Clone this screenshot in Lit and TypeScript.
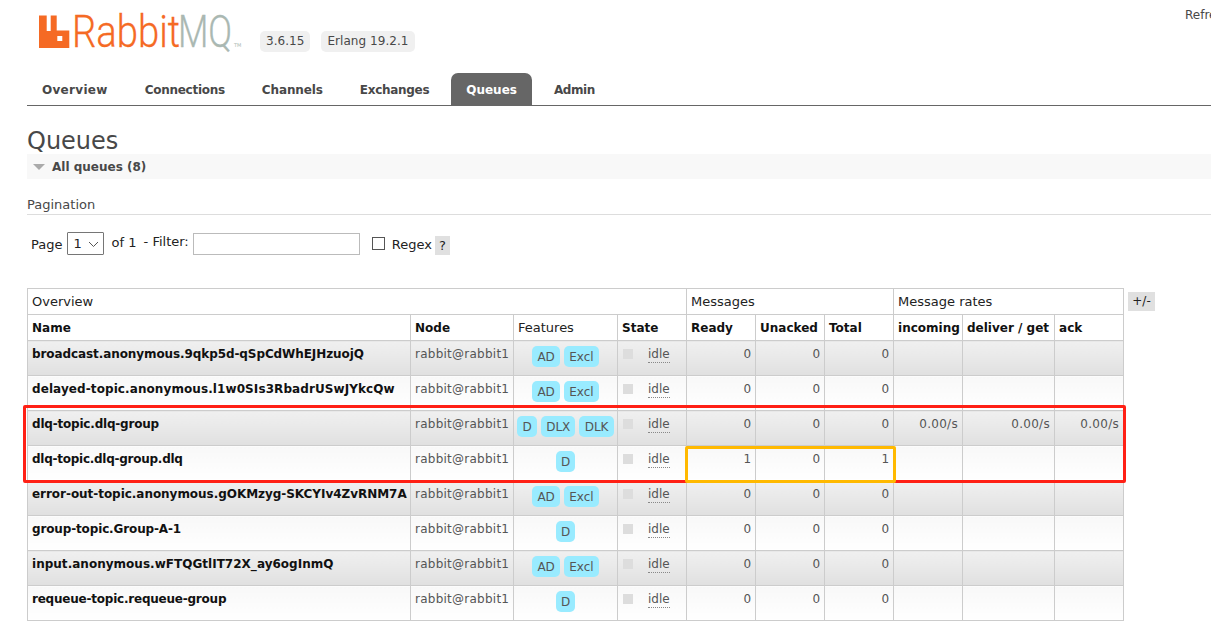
import { LitElement, html, css, svg } from "lit";
import { customElement } from "lit/decorators.js";

const rows = [
  ["broadcast.anonymous.9qkp5d-qSpCdWhEJHzuojQ", ["AD", "Excl"], "0", "0", "0", false, -0.09],
  ["delayed-topic.anonymous.l1w0SIs3RbadrUSwJYkcQw", ["AD", "Excl"], "0", "0", "0", false, 0.09],
  ["dlq-topic.dlq-group", ["D", "DLX", "DLK"], "0", "0", "0", true, -0.2],
  ["dlq-topic.dlq-group.dlq", ["D"], "1", "0", "1", false, -0.26],
  ["error-out-topic.anonymous.gOKMzyg-SKCYIv4ZvRNM7A", ["AD", "Excl"], "0", "0", "0", false, -0.04],
  ["group-topic.Group-A-1", ["D"], "0", "0", "0", false, -0.14],
  ["input.anonymous.wFTQGtlIT72X_ay6ogInmQ", ["AD", "Excl"], "0", "0", "0", false, 0.02],
  ["requeue-topic.requeue-group", ["D"], "0", "0", "0", false, -0.22],
] as const;

const colWidths = [383, 103, 104, 69, 69, 69, 69, 69, 92, 69];
const tabs: [string, number][] = [
  ["Overview", 0.3],
  ["Connections", -0.27],
  ["Channels", -0.12],
  ["Exchanges", -0.3],
  ["Queues", 0],
  ["Admin", -0.4],
];

@customElement("app-root")
export class AppRoot extends LitElement {
  static styles = css`
    :host {
      display: block;
      width: 1211px;
      height: 636px;
      overflow: hidden;
      background: #fff;
      font: 12px "DejaVu Sans", Verdana, sans-serif;
      color: #484848;
    }
    .header {
      height: 73px;
      padding-left: 39px;
      display: flex;
      align-items: flex-start;
      position: relative;
    }
    .logo { display: block; margin-top: 10px; overflow: visible; }
    .version {
      background: #f0f0f0;
      border-radius: 5px;
      padding: 0 6px;
      height: 21px;
      line-height: 21px;
      margin-top: 31px;
      font-size: 12px;
      letter-spacing: 0.05px;
    }
    .v1 { margin-left: 15px; }
    .v2 { margin-left: 11px; }
    .refresh { position: absolute; left: 1185px; top: 8px; white-space: nowrap; }
    .tabs {
      display: flex;
      margin-left: 27px;
      height: 32px;
      border-bottom: 1px solid #666;
    }
    .tab {
      padding: 2px 15px 0;
      line-height: 30px;
      font-weight: bold;
      margin-right: 7px;
      border-radius: 7px 7px 0 0;
      color: #484848;
    }
    .tab.on { background: #666; color: #fff; }
    .content { padding-left: 27px; }
    h1 {
      margin: 0;
      font-size: 24px;
      font-weight: normal;
      line-height: 30px;
      padding-top: 20px;
      height: 28px;
      color: #484848;
    }
    .section {
      height: 25px;
      background: #f8f8f8;
      display: flex;
      align-items: center;
      gap: 7px;
      font-weight: bold;
      padding-left: 6px;
    }
    .tri {
      width: 0;
      height: 0;
      border-left: 6px solid transparent;
      border-right: 6px solid transparent;
      border-top: 6px solid #aaa;
    }
    .pag {
      margin-top: 18px;
      height: 17px;
      border-bottom: 1px solid #ddd;
      line-height: 15px;
      font-size: 13px;
    }
    .filter {
      display: flex;
      align-items: flex-start;
      height: 56px;
      padding: 17px 0 0 4px;
      color: #222;
      font-size: 13px;
    }
    .filter span { white-space: pre; }
    .t1 { margin-top: 5px; }
    .sel {
      box-sizing: border-box;
      width: 37px;
      height: 23px;
      border: 1px solid #767676;
      margin-left: 5px;
      display: flex;
      align-items: center;
      justify-content: space-between;
      padding: 0 4px 0 5px;
      border-radius: 1px;
      background: #fff;
    }
    .t2 { margin: 3px 0 0 7px; }
    .t3 { margin: 2px 0 0 3px; }
    input[type="text"] {
      box-sizing: border-box;
      width: 167px;
      height: 22px;
      border: 1px solid #bbb;
      margin: 1px 0 0 4px;
      padding: 0;
      background: #fff;
    }
    input[type="checkbox"] {
      appearance: none;
      box-sizing: border-box;
      width: 13px;
      height: 13px;
      border: 1px solid #555;
      margin: 5px 0 0 12px;
      background: #fff;
    }
    .t4 { margin: 5px 0 0 7px; }
    .help {
      width: 15px;
      height: 19px;
      line-height: 19px;
      margin: 4px 0 0 3px;
      text-align: center;
      background: #e0e0e0;
    }
    .wrap { position: relative; width: 1184px; }
    table {
      border-collapse: collapse;
      table-layout: fixed;
      width: 1096px;
    }
    th, td {
      border: 1px solid #ccc;
      padding: 0 4px;
      vertical-align: top;
      white-space: nowrap;
      overflow: hidden;
    }
    th {
      color: #111;
      text-align: left;
      font-weight: bold;
      padding-top: 1px;
      height: 24px;
      line-height: 24px;
      background: #fff;
    }
    th.plain { font-weight: normal; color: #222; font-size: 13px; }
    td { line-height: 15px; padding-top: 6px; box-sizing: border-box; height: 35px; color: #555; }
    tr.alt1 td { background: linear-gradient(#f0f0f0, #e0e0e0); }
    tr.alt2 td { background: linear-gradient(#f8f8f8, #fff); }
    td.name { font-weight: bold; color: #111; }
    td.node { letter-spacing: 0.25px; }
    td.feat { text-align: center; padding: 5px 0 0; line-height: 0; }
    td.num { text-align: right; }
    td.rate { letter-spacing: 0.3px; }
    .badge {
      display: inline-block;
      height: 21px;
      line-height: 22px;
      background: #99ebff;
      border-radius: 5px;
      padding: 0 5.2px;
      margin: 0 2px;
      color: #555;
    }
    .state { display: flex; align-items: flex-start; }
    .dot { width: 10px; height: 10px; background: #ddd; margin: 2px 0 0 1px; }
    .idle {
      margin-left: 15px;
      border-bottom: 1px dotted #888;
      line-height: 15px;
    }
    .toggle {
      position: absolute;
      left: 1101px;
      top: 4px;
      width: 27px;
      height: 19px;
      line-height: 19px;
      text-align: center;
      background: #e0e0e0;
      color: #222;
    }
    .mark { position: absolute; box-sizing: border-box; pointer-events: none; border-radius: 2px; }
    .red { left: -4px; top: 117px; width: 1103px; height: 78px; border: 3px solid #ff2015; }
    .orange { left: 658px; top: 158px; width: 211px; height: 37px; border: 3px solid #ffb900; }
  `;

  private logo() {
    return html`<svg class="logo" width="206" height="42" viewBox="0 0 206 42">
      ${svg`<path fill="#f56a24" fill-rule="evenodd" d="M0 5.500H7.700V21H11.700V5.500H17.700V20.500H30.300V38H0ZM18.300 26V31H23.300V26Z"></path>
      <g font-family="Roboto, Lato, sans-serif" font-size="45" font-weight="300" stroke-width=".3">
        <text transform="translate(33 37) scale(.85 1)" fill="#f56a24" stroke="#f56a24">Rabbit</text>
        <text transform="translate(139 37) scale(.78 1)" fill="#aab8b2" stroke="#aab8b2">MQ</text>
      </g>
      <text x="195" y="37" font-family="'DejaVu Sans', sans-serif" font-size="5" fill="#aab8b2">TM</text>`}
    </svg>`;
  }

  render() {
    return html`
      <div class="header">
        ${this.logo()}
        <div class="version v1">3.6.15</div>
        <div class="version v2">Erlang 19.2.1</div>
        <div class="refresh">Refresh</div>
      </div>
      <div class="tabs">
        ${tabs.map(
          ([t, ls]) => html`<div class="tab ${t === "Queues" ? "on" : ""}" style="letter-spacing:${ls}px">${t}</div>`
        )}
      </div>
      <div class="content">
        <h1>Queues</h1>
        <div class="section"><i class="tri"></i>All queues (8)</div>
        <div class="pag">Pagination</div>
        <div class="filter">
          <span class="t1">Page</span>
          <div class="sel">1
            <svg width="11" height="6" viewBox="0 0 11 6"><path d="M1 1l4.500 4.500L10 1" fill="none" stroke="#555"></path></svg>
          </div>
          <span class="t2">of 1</span>
          <span class="t3"> - Filter:</span>
          <input type="text" />
          <input type="checkbox" />
          <span class="t4">Regex</span>
          <div class="help">?</div>
        </div>
        <div class="wrap">
          <table>
            <colgroup>${colWidths.map((w) => html`<col style="width:${w}px" />`)}</colgroup>
            <tr>
              <th class="plain" colspan="4">Overview</th>
              <th class="plain" colspan="3">Messages</th>
              <th class="plain" colspan="3">Message rates</th>
            </tr>
            <tr>
              <th>Name</th><th>Node</th><th class="plain">Features</th><th>State</th>
              <th>Ready</th><th>Unacked</th><th>Total</th>
              <th>incoming</th><th>deliver / get</th><th>ack</th>
            </tr>
            ${rows.map(
              (r, i) => html`<tr class=${i % 2 ? "alt2" : "alt1"}>
                <td class="name" style="letter-spacing:${r[6]}px">${r[0]}</td>
                <td class="node">rabbit@rabbit1</td>
                <td class="feat">${r[1].map((b) => html`<span class="badge">${b}</span>`)}</td>
                <td><div class="state"><i class="dot"></i><span class="idle">idle</span></div></td>
                <td class="num">${r[2]}</td>
                <td class="num">${r[3]}</td>
                <td class="num">${r[4]}</td>
                <td class="num rate">${r[5] ? "0.00/s" : ""}</td>
                <td class="num rate">${r[5] ? "0.00/s" : ""}</td>
                <td class="num rate">${r[5] ? "0.00/s" : ""}</td>
              </tr>`
            )}
          </table>
          <div class="toggle">+/-</div>
          <div class="mark red"></div>
          <div class="mark orange"></div>
        </div>
      </div>
    `;
  }
}
